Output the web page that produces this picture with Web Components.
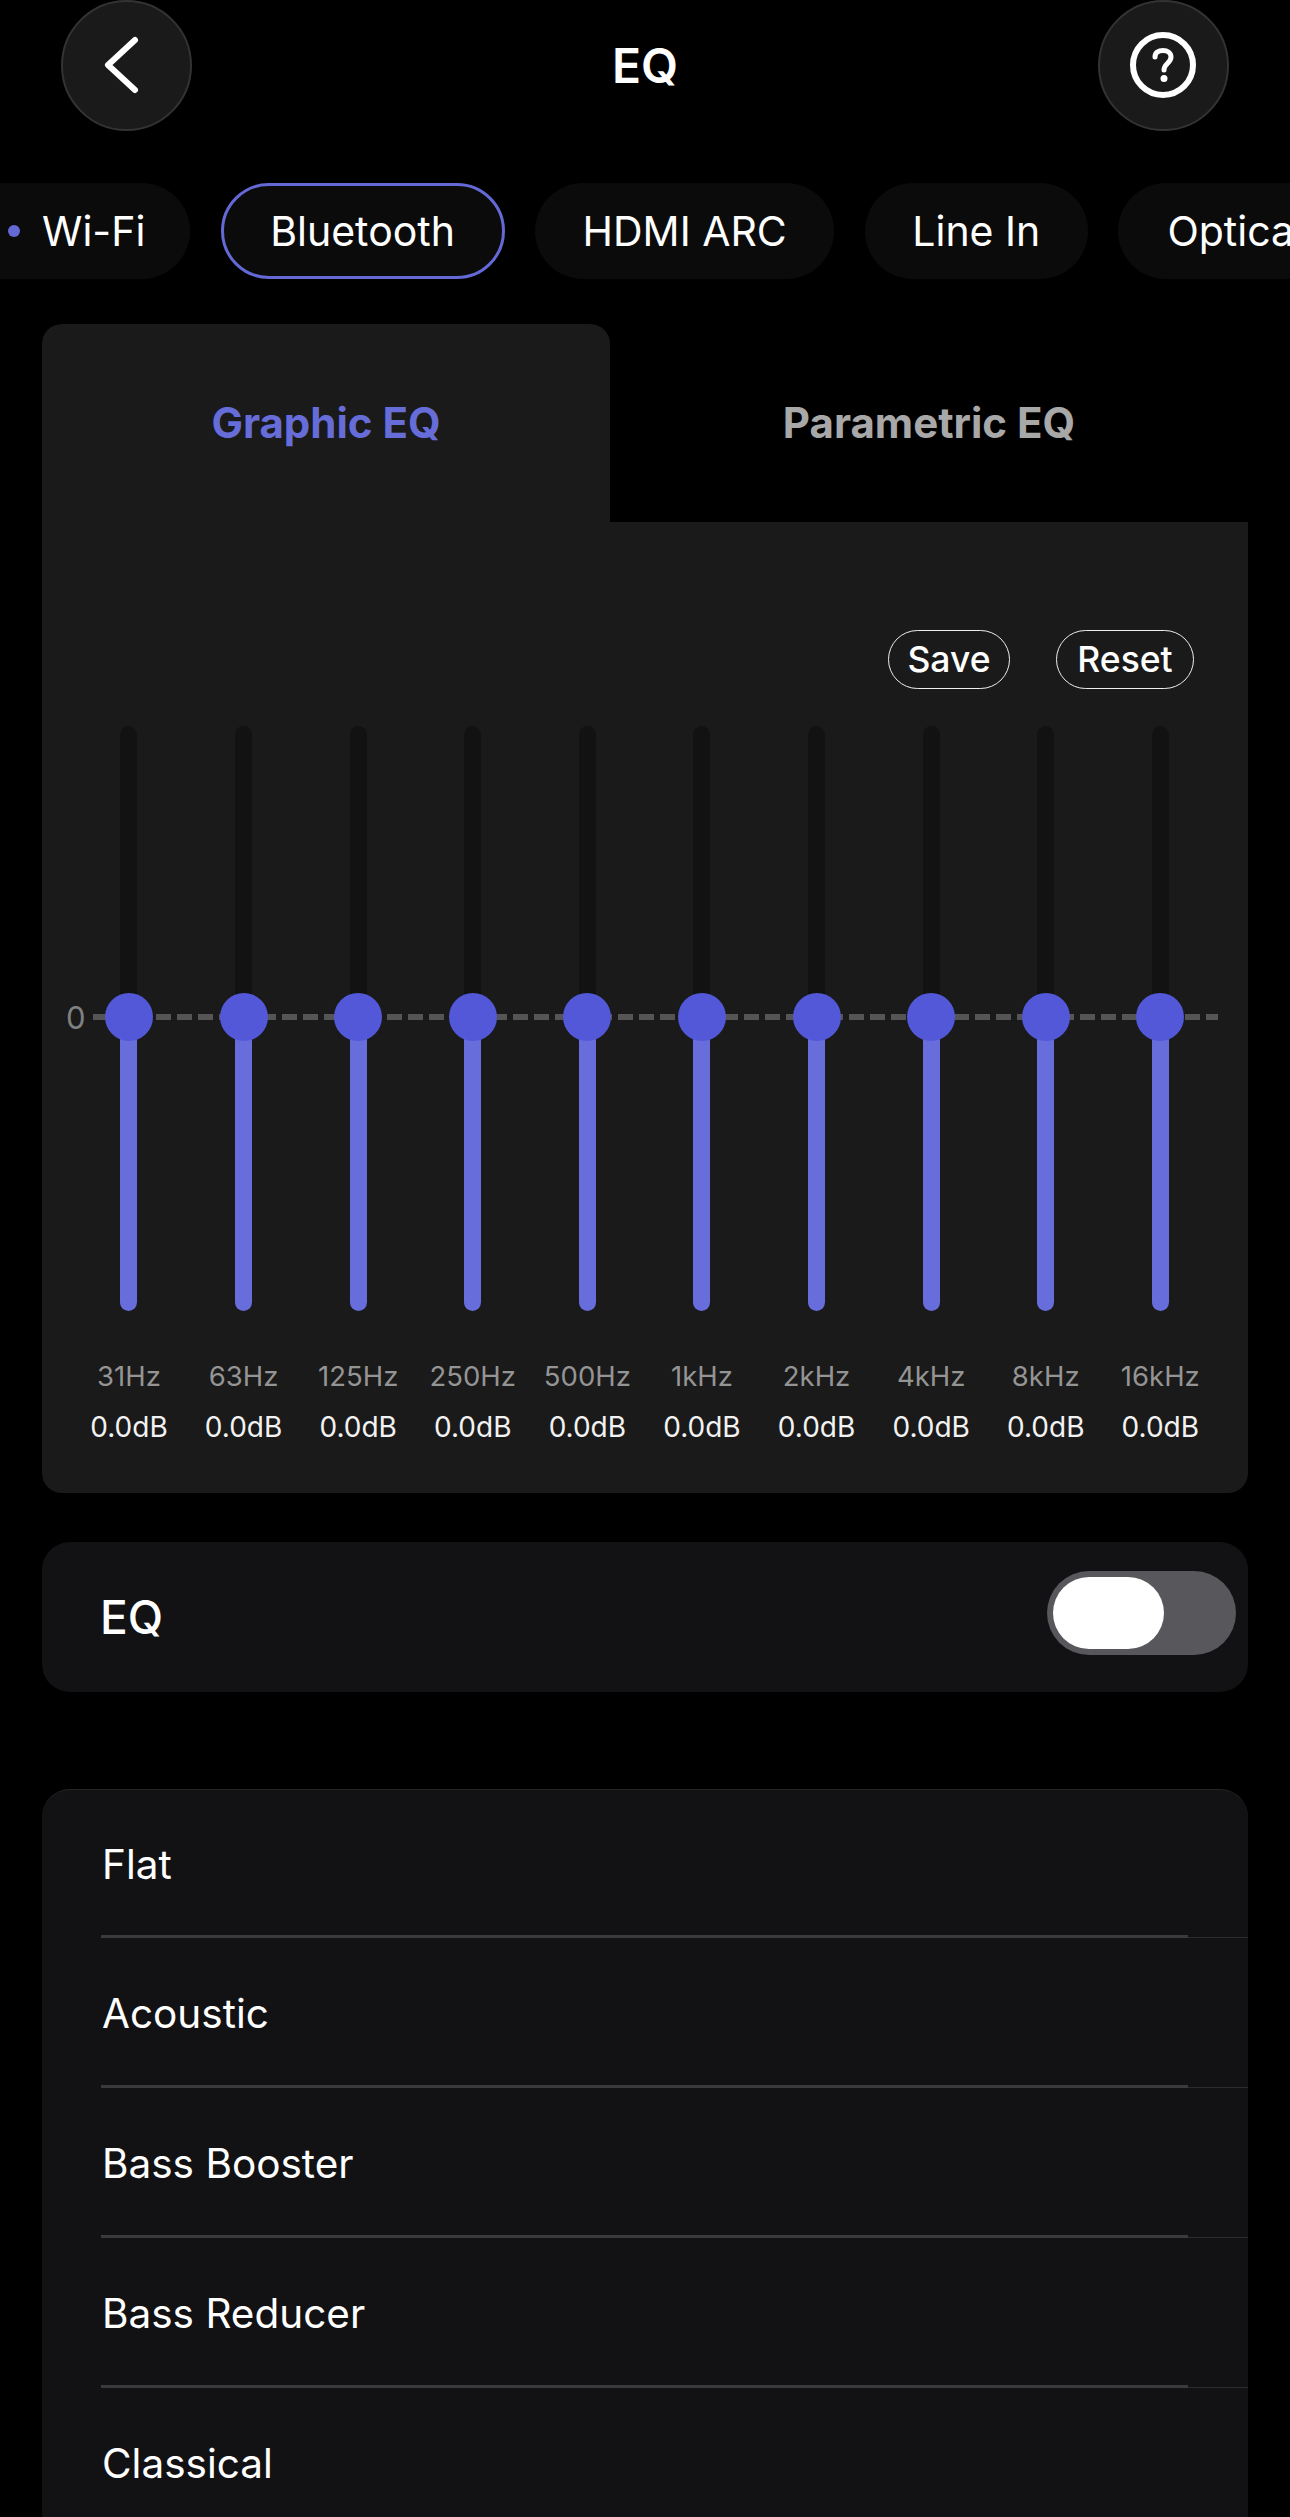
<!DOCTYPE html>
<html>
<head>
<meta charset="utf-8">
<title>EQ</title>
<style>
    html, body { margin: 0; padding: 0; background: #000; }
    body { width: 1290px; height: 2517px; overflow: hidden; font-family: Inter, "Liberation Sans", sans-serif; color: #fff; }
</style>
</head>
<body>
<eq-page>
    <top-bar title="EQ"></top-bar>
    <source-tabs></source-tabs>
    <eq-panel></eq-panel>
    <eq-toggle-row>EQ</eq-toggle-row>
    <preset-list>
        <preset-item>Flat</preset-item>
        <preset-item>Acoustic</preset-item>
        <preset-item>Bass Booster</preset-item>
        <preset-item>Bass Reducer</preset-item>
        <preset-item last>Classical</preset-item>
    </preset-list>
</eq-page>

<script>
class EqPage extends HTMLElement {
    constructor() {
        super();
        this.attachShadow({ mode: "open" });
        this.shadowRoot.innerHTML = `
            <style>
                :host { display: block; width: 1290px; height: 2517px; overflow: hidden; }
            </style>
            <slot></slot>
        `
    }
}

class TopBar extends HTMLElement {
    constructor() {
        super();
        this.attachShadow({ mode: "open" });
        this.shadowRoot.innerHTML = `
            <style>
                :host { display: flex; align-items: center; justify-content: space-between; height: 131px; padding: 0 61px; }
                .round {
                    width: 131px; height: 131px; box-sizing: border-box; border-radius: 50%;
                    background: #1a1a1a; border: 2px solid #333;
                    display: flex; align-items: center; justify-content: center;
                    flex: none;
                }
                svg { flex: none; }
                h1 { margin: 0; font-size: 48px; font-weight: 600; }
            </style>
            <div class="round">
                <svg width="127" height="127" viewBox="2 2 127 127" fill="none" stroke="#fff" stroke-width="6" stroke-linecap="round" stroke-linejoin="round">
                    <path d="M74 40 L47 65 L74 90"/>
                </svg>
            </div>
            <h1 id="title"></h1>
            <div class="round">
                <svg width="127" height="127" viewBox="2 2 127 127" fill="none" stroke="#fff">
                    <circle cx="65" cy="65" r="30" stroke-width="6"/>
                    <path d="M57 57 C57 52.5 60.5 50.5 65 50.5 C69.5 50.5 73 53 73 57 C73 63 66 63.5 66 70" stroke-width="5" stroke-linecap="round"/>
                    <circle cx="66" cy="78.5" r="3.5" fill="#fff" stroke="none"/>
                </svg>
            </div>
        `
    }

    connectedCallback() {
        this.shadowRoot.querySelector("#title").textContent = this.getAttribute("title");
    }
}

class SourceTabs extends HTMLElement {
    constructor() {
        super();
        this.attachShadow({ mode: "open" });
        this.shadowRoot.innerHTML = `
            <style>
                :host { display: flex; gap: 30.6px; height: 96px; margin: 52px 0 0 -60px; width: 1350px; }
                .pill {
                    box-sizing: border-box; height: 96px; border-radius: 48px; background: #0b0b0b; flex: none;
                    display: flex; align-items: center; justify-content: center;
                    font-size: 41px; font-weight: 400; white-space: nowrap;
                }
                .on { border: 3px solid #6469d6; }
                .dot { width: 12px; height: 12px; border-radius: 50%; background: #6469d6; margin-right: 22px; }
                .start { justify-content: flex-start; }
            </style>
            <div class="pill start" style="width:250px;padding-left:68px"><span class="dot"></span>Wi-Fi</div>
            <div class="pill on" style="width:284px">Bluetooth</div>
            <div class="pill" style="width:299px">HDMI ARC</div>
            <div class="pill" style="width:223px">Line In</div>
            <div class="pill start" style="width:300px;padding-left:49px">Optical</div>
        `
    }
}

class EqPanel extends HTMLElement {
    constructor() {
        super();
        this.attachShadow({ mode: "open" });
        this.shadowRoot.innerHTML = `
            <style>
                :host { display: block; margin: 45px 42px 0 42px; }
                .tabs { display: grid; grid-template-columns: 568px 1fr; height: 198px; }
                .tab { display: flex; justify-content: center; box-sizing: border-box; height: 198px; padding-top: 74px; font-size: 42px; font-weight: 700; color: #a8a8a8; line-height: 50px; }
                .tab.active { background: #1a1a1a; border-radius: 20px 20px 0 0; color: #666dd8; }
                .body { background: #1a1a1a; border-radius: 0 0 20px 20px; height: 971px; box-sizing: border-box; padding-top: 108px; }
                .actions { display: flex; justify-content: flex-end; gap: 46px; padding-right: 54px; height: 59px; }
                eq-band-row { margin-top: 37px; }
            </style>
            <div class="tabs">
                <div class="tab active">Graphic EQ</div>
                <div class="tab">Parametric EQ</div>
            </div>
            <div class="body">
                <div class="actions">
                    <outline-button style="width:122px">Save</outline-button>
                    <outline-button style="width:138px">Reset</outline-button>
                </div>
                <eq-band-row></eq-band-row>
            </div>
        `
    }
}

class OutlineButton extends HTMLElement {
    constructor() {
        super();
        this.attachShadow({ mode: "open" });
        this.shadowRoot.innerHTML = `
            <style>
                :host {
                    display: flex; align-items: center; justify-content: center; box-sizing: border-box;
                    height: 59px; border: 1.5px solid #eee; border-radius: 30px;
                    font-size: 35.5px; font-weight: 500;
                }
            </style>
            <slot></slot>
        `
    }
}

class EqBandRow extends HTMLElement {
    constructor() {
        super();
        this.attachShadow({ mode: "open" });
        this.shadowRoot.innerHTML = `
            <style>
                :host { display: block; position: relative; }
                .line {
                    position: absolute; left: 51px; width: 1125px; top: 288px; height: 6px;
                    background: repeating-linear-gradient(90deg, #555 0 15px, transparent 15px 21px);
                }
                .zero { position: absolute; left: 24px; top: 272px; font-size: 31px; line-height: 40px; color: #808080; }
                .bands { position: relative; display: grid; grid-template-columns: repeat(10, 114.6px); padding-left: 29.7px; }
            </style>
            <div class="line"></div>
            <span class="zero">0</span>
            <div class="bands" id="bands"></div>
        `
    }

    connectedCallback() {
        const freqs = ["31Hz", "63Hz", "125Hz", "250Hz", "500Hz", "1kHz", "2kHz", "4kHz", "8kHz", "16kHz"];
        const container = this.shadowRoot.querySelector("#bands");
        container.innerHTML = "";
        for (let i = 0; i < freqs.length; i++) {
            const band = document.createElement("eq-band");
            band.setAttribute("freq", freqs[i]);
            band.setAttribute("gain", "0.0dB");
            container.appendChild(band);
        }
    }
}

class EqBand extends HTMLElement {
    constructor() {
        super();
        this.attachShadow({ mode: "open" });
        this.shadowRoot.innerHTML = `
            <style>
                :host { display: flex; flex-direction: column; align-items: center; }
                .track { position: relative; width: 17px; height: 585px; border-radius: 9px; background: #121212; }
                .fill { position: absolute; left: 0; right: 0; bottom: 0; height: 294px; border-radius: 0 0 9px 9px; background: #686ddc; }
                .thumb { position: absolute; left: -15.5px; top: 267px; width: 48px; height: 48px; border-radius: 50%; background: #5258d8; }
                .freq { margin-top: 48px; font-size: 27.5px; line-height: 34px; color: #949494; white-space: nowrap; }
                .gain { margin-top: 17px; font-size: 28px; line-height: 34px; color: #f2f2f2; white-space: nowrap; }
            </style>
            <div class="track"><div class="fill"></div><div class="thumb"></div></div>
            <div class="freq" id="freq"></div>
            <div class="gain" id="gain"></div>
        `
    }

    connectedCallback() {
        this.shadowRoot.querySelector("#freq").textContent = this.getAttribute("freq");
        this.shadowRoot.querySelector("#gain").textContent = this.getAttribute("gain");
    }
}

class EqToggleRow extends HTMLElement {
    constructor() {
        super();
        this.attachShadow({ mode: "open" });
        this.shadowRoot.innerHTML = `
            <style>
                :host {
                    display: flex; align-items: center; justify-content: space-between; box-sizing: border-box;
                    height: 150px; margin: 49px 42px 0; padding: 0 12px 0 58px;
                    background: #121214; border-radius: 28px; font-size: 46px; font-weight: 500;
                }
                .switch { box-sizing: border-box; width: 189px; height: 84px; padding: 6px; border-radius: 42px; background: #58575c; margin-bottom: 8px; }
                .knob { width: 111px; height: 72px; border-radius: 36px; background: #fff; }
            </style>
            <slot></slot>
            <div class="switch"><div class="knob"></div></div>
        `
    }
}

class PresetList extends HTMLElement {
    constructor() {
        super();
        this.attachShadow({ mode: "open" });
        this.shadowRoot.innerHTML = `
            <style>
                :host {
                    display: block; box-sizing: border-box; margin: 97px 42px 0; height: 800px;
                    background: #121214; border-radius: 28px 28px 0 0; border-top: 1.5px solid #262628;
                }
            </style>
            <slot></slot>
        `
    }
}

class PresetItem extends HTMLElement {
    constructor() {
        super();
        this.attachShadow({ mode: "open" });
        this.shadowRoot.innerHTML = `
            <style>
                :host { display: block; position: relative; box-sizing: border-box; height: 150px; padding: 0 0 0 60px; font-size: 40.5px; }
                :host(:first-child) { height: 148px; }
                .label { display: flex; align-items: center; height: 100%; }
                .rule { position: absolute; left: 59px; right: 60px; bottom: 0; height: 3px; background: #3a3a3c; }
                .thin { position: absolute; left: 1146px; right: 0; bottom: 0; height: 1px; background: #2c2c2e; }
                :host([last]) .rule, :host([last]) .thin { display: none; }
            </style>
            <div class="label"><slot></slot></div>
            <div class="rule"></div>
            <div class="thin"></div>
        `
    }
}

customElements.define("eq-page", EqPage);
customElements.define("top-bar", TopBar);
customElements.define("source-tabs", SourceTabs);
customElements.define("outline-button", OutlineButton);
customElements.define("eq-band", EqBand);
customElements.define("eq-band-row", EqBandRow);
customElements.define("eq-panel", EqPanel);
customElements.define("eq-toggle-row", EqToggleRow);
customElements.define("preset-item", PresetItem);
customElements.define("preset-list", PresetList);
</script>
</body>
</html>
